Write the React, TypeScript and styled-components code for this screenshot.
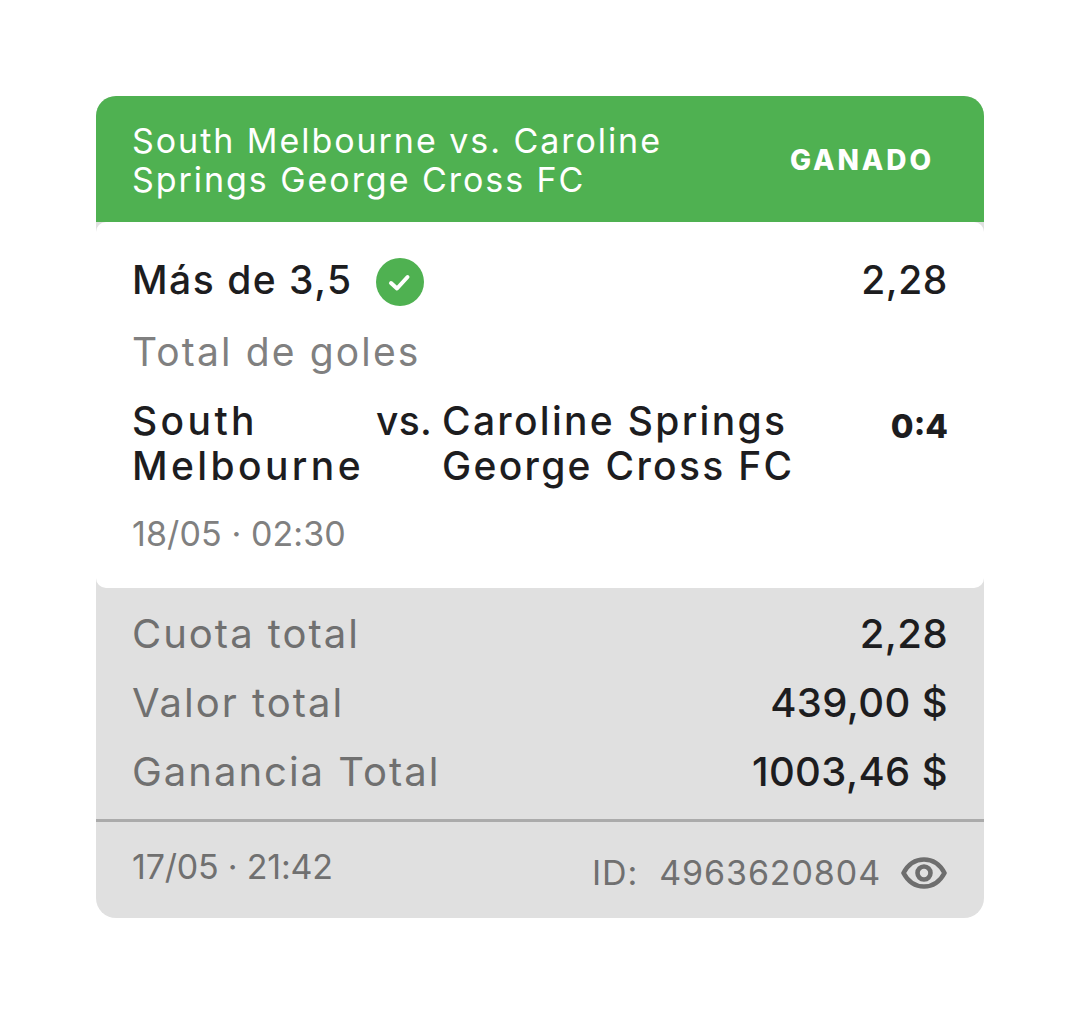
import React from "react";
import styled, { createGlobalStyle } from "styled-components";

const Global = createGlobalStyle`
  html, body { margin: 0; padding: 0; background: #fff; }
  body { font-family: Inter, "Open Sans", "Liberation Sans", sans-serif; }
`;
const Page = styled.div`
  width: 1080px; height: 1014px; padding: 96px 96px 0; box-sizing: border-box; background: #fff;
`;
const Card = styled.div`
  width: 888px; height: 822px; border-radius: 20px; overflow: hidden; background: #e0e0e0;
  display: flex; flex-direction: column;
`;
const Header = styled.div`
  height: 126px; background: #4fb151; color: #fff; padding: 2px 50px 0 36px; box-sizing: border-box;
  display: flex; align-items: center; justify-content: space-between;
`;
const HeaderTitle = styled.div`
  width: 600px; font-size: 34px; line-height: 39px; letter-spacing: 1.95px; font-weight: 400;
`;
const Status = styled.div`
  font-size: 28px; font-weight: 800; letter-spacing: 2.9px;
`;
const Body = styled.div`
  height: 366px; background: #fff; border-radius: 10px; padding: 0 36px;
  display: flex; flex-direction: column; box-sizing: border-box;
`;
const PickRow = styled.div`
  display: flex; justify-content: space-between; align-items: center; height: 60px; margin-top: 30px;
  font-size: 39px; font-weight: 500; color: #1d1d1f;
`;
const Pick = styled.div`display: flex; align-items: center; gap: 23px;`;
const PickText = styled.span<{ $spacing: number }>`
  padding-bottom: 6px; letter-spacing: ${(p) => p.$spacing}px;
`;
const Market = styled.div`
  font-size: 39px; color: #808080; height: 46px; line-height: 46px; margin-top: 17px; letter-spacing: 2.15px;
`;
const MatchRow = styled.div`
  display: grid; grid-template-columns: 244px 66px 400px 1fr; margin-top: 23px;
  font-size: 39px; line-height: 45px; font-weight: 500; color: #1d1d1f;
`;
const TeamName = styled.div<{ $spacing: number }>`
  letter-spacing: ${(p) => p.$spacing}px;
`;
const Score = styled.div`
  font-size: 33px; font-weight: 800; text-align: right; line-height: 57px; color: #1d1d1f;
`;
const MatchDate = styled.div`
  font-size: 34px; color: #808080; margin-top: 26px; line-height: 40px; letter-spacing: 0.1px;
`;
const Summary = styled.div`
  height: 234px; box-sizing: border-box; padding: 11px 36px 0; border-bottom: 3px solid #ababab;
  display: flex; flex-direction: column;
`;
const SummaryRow = styled.div`
  height: 69px; display: flex; justify-content: space-between; align-items: center; font-size: 40px;
  color: #707070; letter-spacing: 2px;
`;
const Value = styled.span`color: #1d1d1f; font-weight: 500; letter-spacing: 0.4px;`;
const Footer = styled.div`
  flex: 1; display: flex; justify-content: space-between; align-items: flex-start; padding: 24px 37px 0 36px;
  font-size: 34px; color: #707070;
`;
const FooterDate = styled.span`letter-spacing: -0.2px;`;
const FooterRight = styled.div`display: flex; align-items: center; gap: 20px; margin-top: 6px;`;
const OrderId = styled.span`letter-spacing: 0.9px;`;

export default function App() {
  return (
    <Page>
      <Global />
      <Card>
        <Header>
          <HeaderTitle>South Melbourne vs. Caroline<br />Springs George Cross FC</HeaderTitle>
          <Status>GANADO</Status>
        </Header>
        <Body>
          <PickRow>
            <Pick>
              <PickText $spacing={1.5}>Más de 3,5</PickText>
              <svg width="48" height="48" viewBox="0 0 48 48">
                <circle cx="24" cy="24" r="24" fill="#4fb151" />
                <path d="M15 25l6 5.5L31.5 19" fill="none" stroke="#fff" strokeWidth="4" strokeLinecap="round" strokeLinejoin="round" />
              </svg>
            </Pick>
            <PickText $spacing={0.6}>2,28</PickText>
          </PickRow>
          <Market>Total de goles</Market>
          <MatchRow>
            <TeamName $spacing={3.4}>South Melbourne</TeamName>
            <TeamName $spacing={0.3}>vs.</TeamName>
            <TeamName $spacing={2.3}>Caroline Springs George Cross FC</TeamName>
            <Score>0:4</Score>
          </MatchRow>
          <MatchDate>18/05 · 02:30</MatchDate>
        </Body>
        <Summary>
          <SummaryRow>Cuota total<Value>2,28</Value></SummaryRow>
          <SummaryRow>Valor total<Value>439,00 $</Value></SummaryRow>
          <SummaryRow>Ganancia Total<Value>1003,46 $</Value></SummaryRow>
        </Summary>
        <Footer>
          <FooterDate>17/05 · 21:42</FooterDate>
          <FooterRight>
            <OrderId>ID:&nbsp; 4963620804</OrderId>
            <svg width="46" height="32" viewBox="0 0 46 32" fill="none">
              <path d="M2.5 16C7 7.5 14.5 2.5 23 2.5S39 7.5 43.5 16C39 24.5 31.5 29.5 23 29.5S7 24.5 2.5 16z" stroke="#6e6e6e" strokeWidth="4.6" strokeLinejoin="round" />
              <circle cx="23" cy="16" r="6.5" stroke="#6e6e6e" strokeWidth="4.6" />
            </svg>
          </FooterRight>
        </Footer>
      </Card>
    </Page>
  );
}
